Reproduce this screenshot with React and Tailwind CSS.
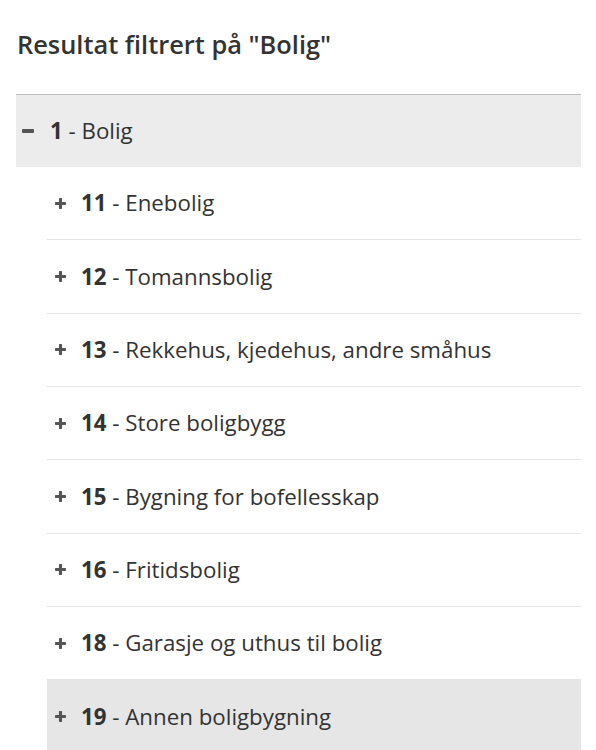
import clsx from 'clsx';

const children = [
  { code: '11', label: 'Enebolig' },
  { code: '12', label: 'Tomannsbolig' },
  { code: '13', label: 'Rekkehus, kjedehus, andre småhus' },
  { code: '14', label: 'Store boligbygg' },
  { code: '15', label: 'Bygning for bofellesskap' },
  { code: '16', label: 'Fritidsbolig' },
  { code: '18', label: 'Garasje og uthus til bolig' },
  { code: '19', label: 'Annen boligbygning', hover: true },
];

function PlusIcon() {
  return (
    <svg viewBox="0 0 12 12" className="w-[11px] h-[11px] flex-shrink-0" fill="#555">
      <rect x="4.3" y="0" width="3.4" height="12" rx="0.8" />
      <rect x="0" y="4.3" width="12" height="3.4" rx="0.8" />
    </svg>
  );
}

export default function App() {
  return (
    <div
      className="bg-white text-[#333] min-h-[750px] px-4 pt-[28px]"
      style={{ fontFamily: '"Open Sans", "Liberation Sans", sans-serif' }}
    >
      <h2 className="text-[25.4px] font-semibold leading-[32px] mb-[34px] pl-[1px]">Resultat filtrert på "Bolig"</h2>

      <div className="border-t border-[#bdbdbd] mr-[-1px]">
        {/* ── Parent row ── */}
        <div className="h-[72px] bg-[#ececec] flex items-center pl-[6px]">
          <span className="w-[12px] h-[4px] bg-[#555] rounded-[1px] flex-shrink-0" />
          <span className="ml-[16px] text-[22.3px]">
            <b className="font-bold">1</b> - Bolig
          </span>
        </div>

        {/* ── Children ── */}
        <div className="pl-[31px]">
          {children.map(({ code, label, hover }, i) => (
            <div
              key={code}
              className={clsx(
                'h-[73.33px] flex items-center pl-[8px]',
                i < children.length - 1 && 'border-b border-[#e6e6e6]',
                hover && 'bg-[#e6e6e6]'
              )}
            >
              <PlusIcon />
              <span className="ml-[15px] text-[22.3px] whitespace-nowrap">
                <b className="font-bold">{code}</b> - {label}
              </span>
            </div>
          ))}
        </div>
      </div>
    </div>
  );
}
